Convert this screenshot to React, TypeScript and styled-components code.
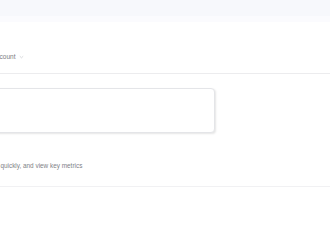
import React from "react";
import styled, { createGlobalStyle } from "styled-components";

const GlobalStyle = createGlobalStyle`
  html, body {
    margin: 0;
    padding: 0;
    background: #ffffff;
    font-family: "Liberation Sans", Arial, sans-serif;
  }
`;

const Page = styled.div`
  width: 330px;
  height: 220px;
  overflow: hidden;
  display: flex;
  flex-direction: column;
`;

const TopBar = styled.div`
  height: 16px;
  background: #f7f8fc;
`;

const SubBar = styled.div`
  height: 6px;
  background: #fbfbfe;
`;

const Section = styled.div<{ $height: number; $line: string; $bottom: number }>`
  height: ${(p) => p.$height}px;
  border-bottom: 1px solid ${(p) => p.$line};
  display: flex;
  align-items: flex-end;
  padding-bottom: ${(p) => p.$bottom}px;
  box-sizing: border-box;
`;

const Shift = styled.div<{ $offset: number }>`
  margin-left: ${(p) => p.$offset}px;
  display: flex;
  align-items: center;
  gap: 2px;
  white-space: nowrap;
`;

const Label = styled.span`
  font-size: 6.5px;
  color: #7a7c81;
`;

const Chevron = styled.svg`
  width: 5px;
  height: 4px;
  margin-left: 1px;
`;

const Description = styled.span`
  font-size: 6.4px;
  color: #808287;
`;

const CardArea = styled.div`
  padding: 14px 0 0 0;
  height: 60px;
  box-sizing: border-box;
`;

const Card = styled.div`
  margin-left: -20px;
  width: 235px;
  height: 45px;
  box-sizing: border-box;
  background: #ffffff;
  border: 1px solid #e4e5e8;
  border-radius: 4px;
  box-shadow: 1px 1px 2px rgba(0, 0, 0, 0.1);
`;

const App: React.FC = () => {
  return (
    <>
      <GlobalStyle />
      <Page>
        <TopBar />
        <SubBar />
        <Section $height={52} $line="#ececee" $bottom={13}>
          <Shift $offset={-8}>
            <Label>Account</Label>
            <Chevron viewBox="0 0 5 4">
              <path d="M0.8 1.2 L2.5 2.8 L4.2 1.2" fill="none" stroke="#c8cacf" strokeWidth="0.7" />
            </Chevron>
          </Shift>
        </Section>
        <CardArea>
          <Card />
        </CardArea>
        <Section $height={53} $line="#f1f1f3" $bottom={17}>
          <Shift $offset={-37}>
            <Description>Track orders quickly, and view key metrics</Description>
          </Shift>
        </Section>
      </Page>
    </>
  );
};

export default App;
